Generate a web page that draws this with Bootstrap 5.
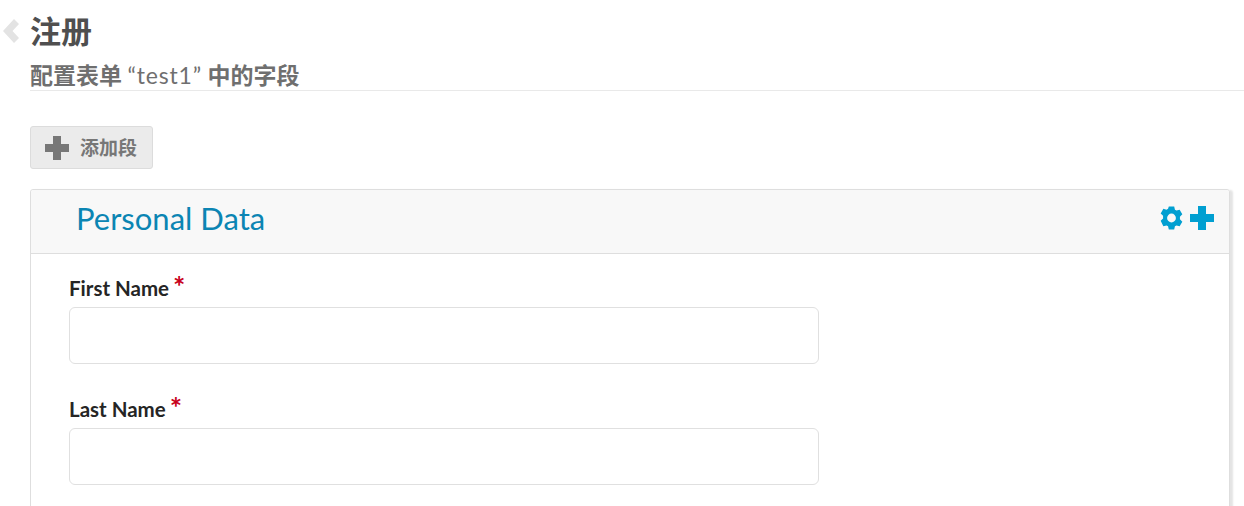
<!DOCTYPE html>
<html lang="zh">
<head>
  <meta charset="UTF-8" />
  <meta name="viewport" content="width=device-width, initial-scale=1" />
  <title>注册</title>
  <link href="https://cdn.jsdelivr.net/npm/bootstrap@5.3.2/dist/css/bootstrap.min.css" rel="stylesheet">
  <style>
    html, body {
      overflow: hidden;
      height: 506px;
    }
    body {
      background: #fff;
      font-family: Lato, "Noto Sans CJK SC", sans-serif;
    }
    .back-col {
      width: 30px;
      padding: 17px 0 0 3px;
    }
    .page-head {
      padding-top: 12px;
      height: 91px;
      border-bottom: 1px solid #e9e9e9;
    }
    .page-title {
      font: 700 31px/38px Lato, "Noto Sans CJK SC", sans-serif;
      color: #4f4f4f;
      margin: 0;
    }
    .page-sub {
      font: 700 23px/30px Lato, "Noto Sans CJK SC", sans-serif;
      color: #6f6f6f;
      margin: 10px 0 0;
    }
    .page-sub span {
      font-weight: 400;
      letter-spacing: .8px;
    }
    .add-btn {
      margin: 35px 0 20px 30px;
      height: 43px;
      width: 123px;
      padding: 0 0 0 14px;
      background: #ebebeb;
      border: 1px solid #dcdcdc;
      border-radius: 3px;
      color: #777;
      font: 700 19px/1 Lato, "Noto Sans CJK SC", sans-serif;
      gap: 11px;
    }
    .add-btn:hover {
      background: #e2e2e2;
      color: #777;
    }
    .field-card {
      margin-left: 30px;
      width: 1200px;
      height: 400px;
      border: 1px solid #dedede;
      border-radius: 3px;
      box-shadow: 3px 1px 2px #e4e4e4;
    }
    .field-head {
      height: 64px;
      padding: 0 15px 0 45px;
      background: #f8f8f8;
      border-bottom: 1px solid #dedede;
      border-radius: 3px 3px 0 0;
    }
    .field-title {
      font: 400 31px/1 Lato, sans-serif;
      color: #0b85b3;
      margin: -6px 0 0;
    }
    .head-icons {
      color: #019fd1;
      gap: 7px;
      margin-top: -7px;
    }
    .field-body {
      padding: 17px 38px;
    }
    .field-row {
      width: 750px;
      margin-bottom: 28px;
    }
    .field-label {
      font: 700 20.500px/26px Lato, sans-serif;
      color: #252525;
      margin-bottom: 6px;
      display: block;
    }
    .req {
      color: #c8001a;
      font-size: 29px;
      line-height: 1;
      margin-left: 4px;
      vertical-align: -1px;
    }
    .field-input {
      height: 57px;
      border: 1px solid #e0e0e0;
      border-radius: 6px;
    }
  </style>
</head>
<body>

<!-- Page header -->
<div class="d-flex">
  <div class="back-col">
    <svg width="16" height="24" viewBox="0 0 16 24"><path d="M11 0 16 5 9.500 12 16 19l-5 5L0 12z" fill="#e3e3e3"/></svg>
  </div>
  <div class="page-head flex-grow-1">
    <h1 class="page-title">注册</h1>
    <h2 class="page-sub">配置表单 <span>“test1”</span> 中的字段</h2>
  </div>
</div>

<button type="button" class="btn add-btn d-flex align-items-center">
  <svg width="24" height="24" viewBox="0 0 24 24"><path d="M8 0h8v8h8v8h-8v8H8v-8H0V8h8z" fill="#777"/></svg>
  添加段
</button>

<!-- Fieldset -->
<div class="field-card">
  <div class="field-head d-flex align-items-center justify-content-between">
    <h3 class="field-title">Personal Data</h3>
    <div class="head-icons d-flex align-items-center">
      <svg width="23" height="24" viewBox="0 0 24 24"><path fill="currentColor" fill-rule="evenodd" d="M9.200 0h5.600l.8 3.400 1.600.9 3.300-1 2.800 4.900-2.500 2.400v2.800l2.500 2.400-2.800 4.900-3.300-1-1.600.9-.8 3.400H9.200l-.8-3.400-1.600-.9-3.300 1L.7 14.800l2.500-2.400V9.600L.7 7.200l2.800-4.900 3.300 1 1.600-.9zM12 7.400a4.600 4.600 0 1 0 0 9.200 4.600 4.600 0 0 0 0-9.200z"/></svg>
      <svg width="24" height="24" viewBox="0 0 24 24"><path d="M8 0h8v8h8v8h-8v8H8v-8H0V8h8z" fill="currentColor"/></svg>
    </div>
  </div>
  <div class="field-body">
    <div class="field-row">
      <label class="field-label" for="firstName">First Name<span class="req">*</span></label>
      <input type="text" class="form-control field-input" id="firstName">
    </div>
    <div class="field-row">
      <label class="field-label" for="lastName">Last Name<span class="req">*</span></label>
      <input type="text" class="form-control field-input" id="lastName">
    </div>
  </div>
</div>

<script src="https://cdn.jsdelivr.net/npm/bootstrap@5.3.2/dist/js/bootstrap.bundle.min.js"></script>
</body>
</html>
